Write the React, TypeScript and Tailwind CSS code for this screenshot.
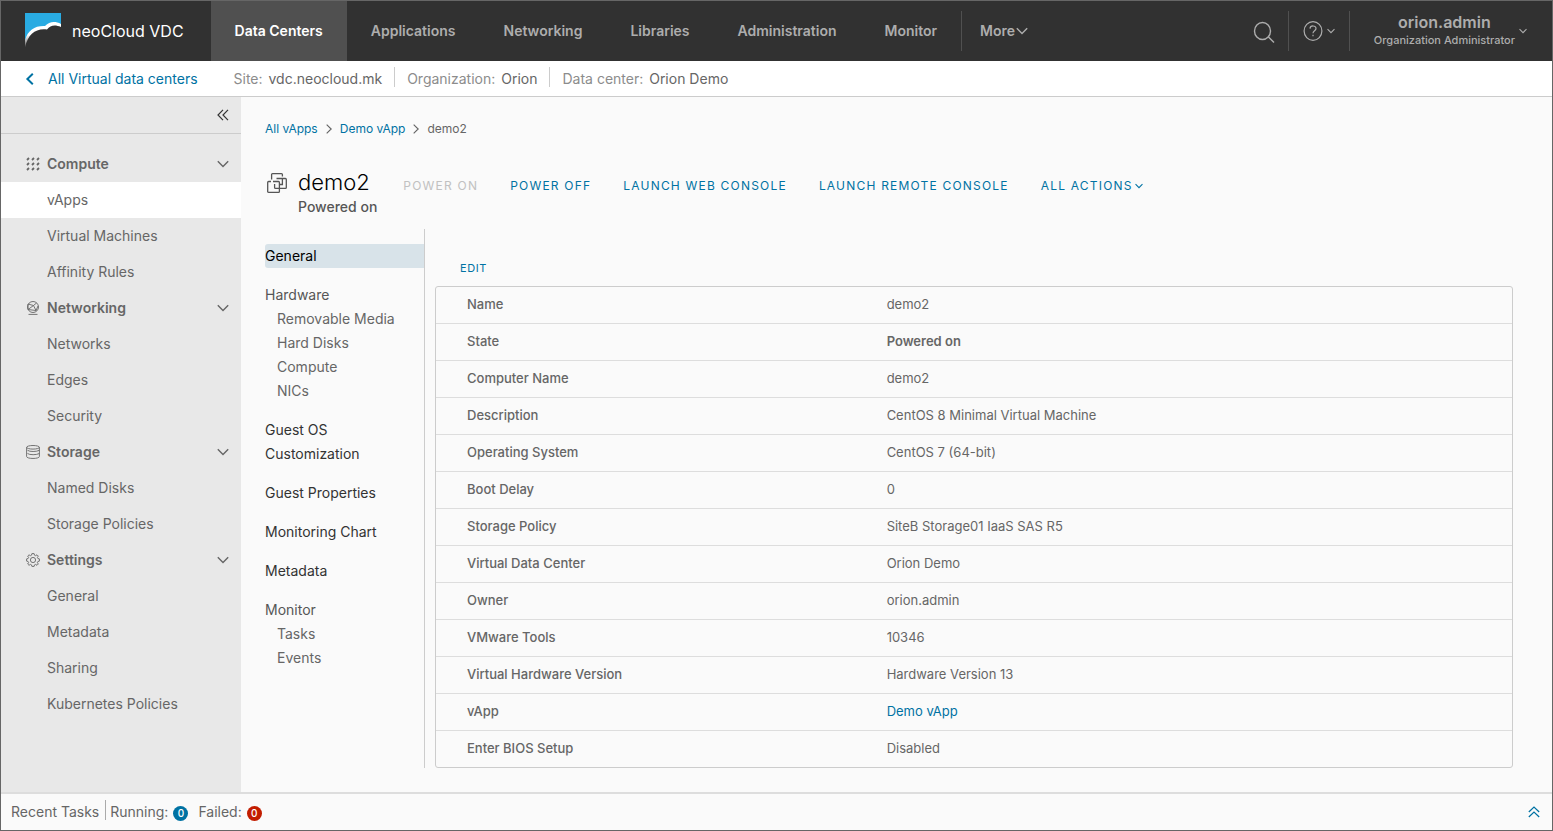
import React from "react";

const NAV_ITEMS = [
  "Applications",
  "Networking",
  "Libraries",
  "Administration",
  "Monitor",
];

const SIDEBAR = [
  { title: "Compute", icon: <GridIcon />, items: ["vApps", "Virtual Machines", "Affinity Rules"] },
  { title: "Networking", icon: <NetworkIcon />, items: ["Networks", "Edges", "Security"] },
  { title: "Storage", icon: <StorageIcon />, items: ["Named Disks", "Storage Policies"] },
  {
    title: "Settings",
    icon: <GearIcon />,
    items: ["General", "Metadata", "Sharing", "Kubernetes Policies"],
  },
];

const DETAILS = [
  ["Name", "demo2"],
  ["State", "Powered on"],
  ["Computer Name", "demo2"],
  ["Description", "CentOS 8 Minimal Virtual Machine"],
  ["Operating System", "CentOS 7 (64-bit)"],
  ["Boot Delay", "0"],
  ["Storage Policy", "SiteB Storage01 IaaS SAS R5"],
  ["Virtual Data Center", "Orion Demo"],
  ["Owner", "orion.admin"],
  ["VMware Tools", "10346"],
  ["Virtual Hardware Version", "Hardware Version 13"],
  ["vApp", "Demo vApp"],
  ["Enter BIOS Setup", "Disabled"],
];

function Logo() {
  return (
    <svg width="36" height="36" viewBox="0 0 36 36" className="shrink-0">
      <defs>
        <linearGradient id="swoosh" x1="0" y1="0" x2="0" y2="1">
          <stop offset="0" stopColor="#ffffff" />
          <stop offset="0.5" stopColor="#ffffff" />
          <stop offset="1" stopColor="#555555" />
        </linearGradient>
      </defs>
      <path d="M0 0H36V12C31 9 26 10 21 14.500C11 13.500 3 19 0 29Z" fill="#29abe2" />
      <path
        d="M0 34.500V27C3 17 10 12.500 20 13C24.500 8.500 30 8 36 11V14C30 11.500 25.500 12 22 16.500C11 15 3 21 0 34.500Z"
        fill="url(#swoosh)"
      />
    </svg>
  );
}

function Chevron({ size = 12, className = "" }: { size?: number; className?: string }) {
  return (
    <svg
      width={size}
      height={size}
      viewBox="0 0 12 12"
      fill="none"
      stroke="currentColor"
      strokeWidth={size < 10 ? 1.6 : 1.4}
      className={"shrink-0 " + className}
    >
      <path d="M0.800 3.200L6 8.600L11.200 3.200" />
    </svg>
  );
}

function DoubleChevron({ className = "" }: { className?: string }) {
  return (
    <svg width="12" height="12" viewBox="0 0 12 12" fill="none" stroke="currentColor" strokeWidth="1.2" className={className}>
      <path d="M6 0.800L1 6L6 11.200M11 0.800L6 6L11 11.200" />
    </svg>
  );
}

function GridIcon() {
  return (
    <svg width="14" height="14" viewBox="0 0 14 14" fill="none" stroke="currentColor" strokeWidth="1.8">
      {[1, 6, 11].map((y) => (
        <path key={y} d={`M1 ${y + 2}L3 ${y}M6 ${y + 2}L8 ${y}M11 ${y + 2}L13 ${y}`} />
      ))}
    </svg>
  );
}

function NetworkIcon() {
  return (
    <svg width="14" height="14" viewBox="0 0 14 14" fill="none" stroke="currentColor" strokeWidth="0.9">
      <circle cx="7" cy="6" r="5.500" />
      <path d="M2 3L7.500 4.500L10.500 2M7.500 4.500L10 9.500M2 8.500L7.500 4.500M2 8.500L10 9.500M12 5L10 9.500M2 3L2 8.500M2.500 13.400H11.500" />
    </svg>
  );
}

function StorageIcon() {
  return (
    <svg width="14" height="14" viewBox="0 0 14 14" fill="none" stroke="currentColor" strokeWidth="0.9">
      <ellipse cx="7" cy="2.300" rx="6.400" ry="1.800" />
      <path d="M0.600 2.300V11.500C0.600 14.100 13.400 14.100 13.400 11.500V2.300M1.500 5.300C3.500 6.900 10.500 6.900 13.400 5.300M1.500 8.500C3.500 10.100 10.500 10.100 13.400 8.500" />
    </svg>
  );
}

function GearIcon() {
  return (
    <svg width="14" height="14" viewBox="0 0 14 14" fill="none" stroke="currentColor" strokeWidth="0.9">
      <circle cx="7" cy="7" r="2.600" />
      <path
        strokeLinejoin="round"
        d="M5.900 0.600H8.100L8.500 2.200L9.600 2.700L11 1.800L12.300 3.100L11.400 4.500L11.900 5.500L13.400 5.900V8.100L11.900 8.500L11.400 9.600L12.300 11L11 12.300L9.600 11.400L8.500 11.900L8.100 13.400H5.900L5.500 11.900L4.400 11.400L3 12.300L1.700 11L2.600 9.600L2.100 8.500L0.600 8.100V5.900L2.100 5.500L2.600 4.500L1.700 3.100L3 1.800L4.400 2.700L5.500 2.200Z"
      />
    </svg>
  );
}

function VmIcon() {
  return (
    <svg width="20" height="20" viewBox="0 0 20 20" fill="none" stroke="currentColor" strokeWidth="1.3" className="shrink-0">
      <path d="M4.600 6.500V1.600C4.600 1 4.900 0.700 5.500 0.700H14.500C15.100 0.700 15.400 1 15.400 1.600V3.500" />
      <path d="M6 8.500H11.500C12.100 8.500 12.400 8.800 12.400 9.400V18.400C12.400 19 12.100 19.300 11.500 19.300H1.600C1 19.300 0.700 19 0.700 18.400V9.400C0.700 8.800 1 8.500 1.600 8.500H4" />
      <path d="M9.500 5.500H18.400C19 5.500 19.300 5.800 19.300 6.400V14.500C19.300 15.100 19 15.400 18.400 15.400H8.500C7.900 15.400 7.600 15.100 7.600 14.500V11M15.400 5.500V11.500H12.500" />
    </svg>
  );
}

function Header() {
  return (
    <header className="flex h-[60px] items-stretch bg-[#313131] text-sm font-semibold text-[#adadad]">
      <a href="#" className="flex items-center gap-[11px] pr-[27px] pl-6 text-base font-normal text-white">
        <Logo />
        neoCloud VDC
      </a>
      <nav className="flex items-stretch">
        <a href="#" className="flex items-center bg-[#505050] px-6 text-white">
          Data Centers
        </a>
        {NAV_ITEMS.map((item) => (
          <a key={item} href="#" className="flex items-center px-6">
            {item}
          </a>
        ))}
        <button className="my-[10px] flex items-center gap-px border-l border-[#505050] pl-[18px]">
          More
          <Chevron />
        </button>
      </nav>
      <div className="ml-auto flex items-center">
        <button aria-label="Search" className="mr-3">
          <svg width="24" height="24" viewBox="0 0 24 24" fill="none" stroke="currentColor" strokeWidth="1.4">
            <ellipse cx="10.500" cy="12" rx="8" ry="8.500" />
            <path d="M16.500 18L22 23.500" />
          </svg>
        </button>
        <button aria-label="Help" className="flex h-10 items-center gap-1 border-l border-[#505050] px-[14px]">
          <svg width="20" height="20" viewBox="0 0 20 20" fill="none" stroke="currentColor" strokeWidth="1.2">
            <ellipse cx="10" cy="10" rx="8.900" ry="9.300" />
            <path d="M7 7.600C7.200 4 13.200 4.200 13 7.600C12.900 9.700 10 9.700 10 12.200M10 13.700V15.300" />
          </svg>
          <Chevron size={8} />
        </button>
        <button className="flex h-10 items-center gap-1 border-l border-[#505050] pr-[25px] pl-6">
          <span className="flex flex-col items-center pb-[2px]">
            <span className="text-base leading-5">orion.admin</span>
            <span className="text-[11px] leading-4 font-medium">Organization Administrator</span>
          </span>
          <Chevron size={8} />
        </button>
      </div>
    </header>
  );
}

function ContextBar() {
  return (
    <div className="flex h-9 items-center border-b border-[#cccccc] bg-white text-sm">
      <a href="#" className="flex items-center gap-3 pl-[23px] text-[#0072a3]">
        <Chevron className="rotate-90 stroke-2" />
        All Virtual data centers
      </a>
      <span className="ml-9 pr-3 text-[#8c8c8c]">
        Site: <span className="ml-[2px] text-[#666666]">vdc.neocloud.mk</span>
      </span>
      <span className="-mt-1 h-5 border-l border-[#cccccc]" />
      <span className="px-3 text-[#8c8c8c]">
        Organization: <span className="ml-[2px] text-[#666666]">Orion</span>
      </span>
      <span className="-mt-1 h-5 border-l border-[#cccccc]" />
      <span className="px-3 text-[#8c8c8c]">
        Data center: <span className="ml-[2px] text-[#666666]">Orion Demo</span>
      </span>
    </div>
  );
}

function Sidebar() {
  return (
    <aside className="w-60 shrink-0 bg-[#e8e8e8] text-sm text-[#666666]">
      <div className="flex h-[37px] items-center justify-end border-b border-[#cccccc] pr-3 text-[#333333]">
        <button aria-label="Collapse menu">
          <DoubleChevron />
        </button>
      </div>
      <nav className="pt-3">
        {SIDEBAR.map((group) => (
          <div key={group.title}>
            <button className="flex h-9 w-full items-center pr-3 pl-[25px] font-semibold">
              {group.icon}
              <span className="ml-[7px]">{group.title}</span>
              <Chevron className="ml-auto" />
            </button>
            {group.items.map((item) => (
              <a
                key={item}
                href="#"
                className={"flex h-9 items-center pl-[46px] " + (item === "vApps" ? "bg-white" : "")}
              >
                {item}
              </a>
            ))}
          </div>
        ))}
      </nav>
    </aside>
  );
}

function VmNav() {
  return (
    <nav className="flex w-40 shrink-0 flex-col gap-[15px] border-r border-[#cccccc] pt-[15px] text-sm leading-6 text-[#333333]">
      <a href="#" className="rounded-l-[3px] bg-[#d8e3e9] text-black">
        General
      </a>
      <div className="text-[#666666]">
        <div className="text-[#565656]">Hardware</div>
        <a href="#" className="block pl-3">Removable Media</a>
        <a href="#" className="block pl-3">Hard Disks</a>
        <a href="#" className="block pl-3">Compute</a>
        <a href="#" className="block pl-3">NICs</a>
      </div>
      <a href="#" className="pr-12">Guest OS Customization</a>
      <a href="#">Guest Properties</a>
      <a href="#">Monitoring Chart</a>
      <a href="#">Metadata</a>
      <div className="text-[#666666]">
        <div className="text-[#565656]">Monitor</div>
        <a href="#" className="block pl-3">Tasks</a>
        <a href="#" className="block pl-3">Events</a>
      </div>
    </nav>
  );
}

function DetailsTable() {
  return (
    <table className="w-full border-separate border-spacing-0 rounded-[3px] border border-[#cccccc] text-left text-[13px] leading-5 text-[#666666]">
      <tbody>
        {DETAILS.map(([label, value], i) => {
          const cell =
            i < DETAILS.length - 1
              ? "h-[37px] border-b border-[#dddddd] px-[31px] pb-[2px] "
              : "h-9 px-[31px] pb-[2px] ";
          return (
            <tr key={label}>
              <th scope="row" className={cell + "w-[39%] font-medium"}>
                {label}
              </th>
              <td className={cell + (label === "State" ? "font-semibold" : "")}>
                {label === "vApp" ? (
                  <a href="#" className="text-[#0072a3]">{value}</a>
                ) : (
                  value
                )}
              </td>
            </tr>
          );
        })}
      </tbody>
    </table>
  );
}

function Main() {
  return (
    <main className="flex min-w-0 flex-1 flex-col pt-5 pr-[39px] pb-6 pl-6">
      <nav className="flex h-6 items-center gap-[5px] text-xs text-[#666666]">
        <a href="#" className="text-[#0072a3]">All vApps</a>
        <Chevron className="-rotate-90 p-px" />
        <a href="#" className="text-[#0072a3]">Demo vApp</a>
        <Chevron className="-rotate-90 p-px" />
        <span>demo2</span>
      </nav>
      <div className="mt-7 flex h-[60px] items-start text-[#565656]">
        <div className="pt-1 pr-[11px] pl-[2px]">
          <VmIcon />
        </div>
        <div>
          <h1 className="text-[22px] leading-[26px] font-light text-black">demo2</h1>
          <p className="text-sm leading-6 font-medium">Powered on</p>
        </div>
        <div className="ml-[10px] flex h-[34px] items-center text-xs tracking-widest text-[#0072a3]">
          <button disabled className="px-4 text-[#c1c1c1]">POWER ON</button>
          <button className="px-4">POWER OFF</button>
          <button className="px-4">LAUNCH WEB CONSOLE</button>
          <button className="px-4">LAUNCH REMOTE CONSOLE</button>
          <button className="flex items-center gap-[2px] px-4">
            ALL ACTIONS
            <Chevron size={8} />
          </button>
        </div>
      </div>
      <div className="flex flex-1 gap-[10px]">
        <VmNav />
        <section className="min-w-0 flex-1 pt-[27px]">
          <button className="mb-[6px] block h-6 px-[25px] text-[11px] tracking-wider text-[#0072a3]">
            EDIT
          </button>
          <DetailsTable />
        </section>
      </div>
    </main>
  );
}

function TaskBar() {
  return (
    <footer className="flex h-[38px] items-center border-t-2 border-[#dddddd] pr-3 pl-[10px] text-sm text-[#666666]">
      <span className="pr-[6px]">Recent Tasks</span>
      <span className="-mt-1 h-5 border-l border-[#aaaaaa]" />
      <span className="pl-1">Running:</span>
      <span className="mt-[2px] ml-[5px] flex size-[15px] items-center justify-center rounded-full bg-[#0072a3] text-[10px] font-medium text-white">
        0
      </span>
      <span className="ml-[10px]">Failed:</span>
      <span className="mt-[2px] ml-[5px] flex size-[15px] items-center justify-center rounded-full bg-[#c21d00] text-[10px] font-medium text-white">
        0
      </span>
      <button aria-label="Expand tasks" className="ml-auto text-[#0072a3]">
        <DoubleChevron className="rotate-90" />
      </button>
    </footer>
  );
}

export default function App() {
  return (
    <div className="flex min-h-screen flex-col border border-[#666666] bg-[#fafafa] font-['Inter',sans-serif]">
      <Header />
      <ContextBar />
      <div className="flex flex-1">
        <Sidebar />
        <Main />
      </div>
      <TaskBar />
    </div>
  );
}
